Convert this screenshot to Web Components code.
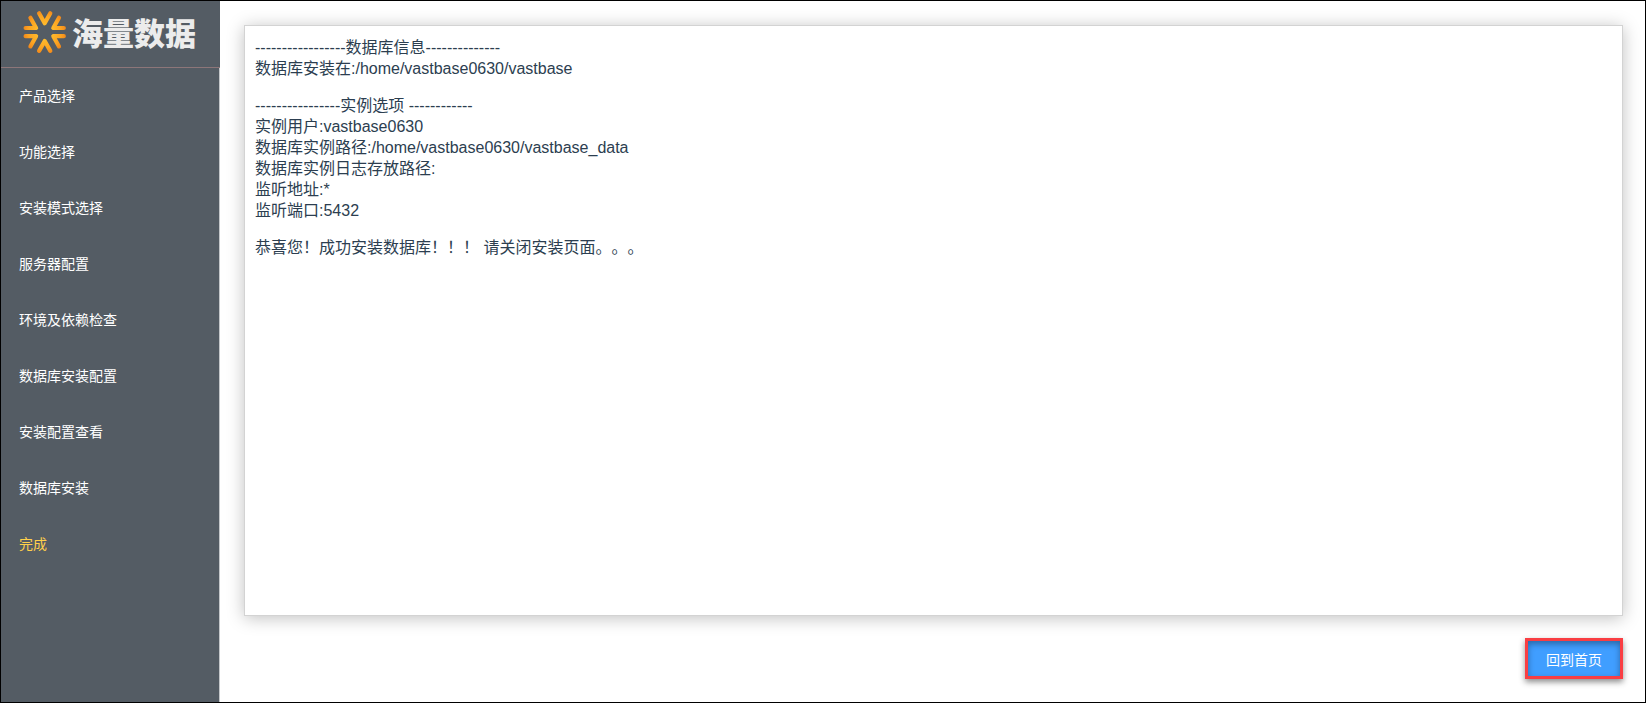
<!DOCTYPE html>
<html lang="zh-CN">
<head>
<meta charset="utf-8">
<title>数据库安装</title>
<style>
    html, body { height: 100%; margin: 0; }
    body {
        font-family: "Liberation Sans", "Noto Sans CJK SC", sans-serif;
        color: #2c3e50;
        background: #fff; }
</style>
</head>
<body>

<install-app>
    <brand-logo slot="brand">海量数据</brand-logo>
    <step-menu slot="steps" current="8"
        steps="产品选择,功能选择,安装模式选择,服务器配置,环境及依赖检查,数据库安装配置,安装配置查看,数据库安装,完成"></step-menu>
    <result-panel>
        <p>-----------------数据库信息--------------<br>
        数据库安装在:/home/vastbase0630/vastbase</p>
        <p>----------------实例选项 ------------<br>
        实例用户:vastbase0630<br>
        数据库实例路径:/home/vastbase0630/vastbase_data<br>
        数据库实例日志存放路径:<br>
        监听地址:*<br>
        监听端口:5432</p>
        <p>恭喜您！成功安装数据库！！！ 请关闭安装页面。。。</p>
    </result-panel>
    <home-button>回到首页</home-button>
</install-app>

<template id="app">
    <style>
        :host {
            display: flex;
            box-sizing: border-box;
            min-height: 100%;
            border: 1px solid #000; }
        aside {
            flex: none;
            display: flex;
            flex-direction: column;
            width: 219px;
            background: #545c64; }
        nav {
            flex: 1;
            border-right: 1px solid #c4c7ca; }
        main {
            flex: 1;
            min-width: 0;
            display: flex;
            flex-direction: column;
            align-items: flex-end;
            gap: 22px;
            padding: 24px 22px 23px 24px; }
    </style>
    <aside>
        <slot name="brand"></slot>
        <nav><slot name="steps"></slot></nav>
    </aside>
    <main><slot></slot></main>
</template>

<template id="logo">
    <style>
        :host {
            display: flex;
            align-items: center;
            gap: 6px;
            box-sizing: border-box;
            height: 67px;
            padding: 0 0 5px 22px;
            border-bottom: 1px solid #8d7679;
            color: #ececec;
            font: 900 31px/40px "Noto Sans CJK SC", sans-serif;
            white-space: nowrap; }
        svg { flex: none; width: 43px; height: 44px; }
    </style>
    <svg viewBox="23 10 43 44" aria-hidden="true">
        <defs>
            <radialGradient id="glow" gradientUnits="userSpaceOnUse" cx="44.7" cy="32" r="22">
                <stop offset="0.3" stop-color="#ffbd2e"/>
                <stop offset="0.75" stop-color="#fca321"/>
                <stop offset="1" stop-color="#ef861b"/>
            </radialGradient>
        </defs>
        <g fill="none" stroke="url(#glow)" stroke-width="4.2" stroke-linecap="round" stroke-linejoin="round">
            <path d="M39.1 13.3 44.7 23.2 50.3 13.3"/>
            <path d="M39.1 50.9 44.7 41 50.3 50.9"/>
            <path d="M30.4 17.8 36.1 28H25.6"/>
            <path d="M59 17.8 53.3 28H63.8"/>
            <path d="M30.4 46.4 36.1 36.2H25.6"/>
            <path d="M59 46.4 53.3 36.2H63.8"/>
        </g>
    </svg>
    <slot></slot>
</template>

<template id="menu">
    <style>
        :host { display: block; }
        ul { margin: 0; padding: 0; list-style: none; }
        a {
            display: block;
            padding: 0 18px;
            font-size: 14px;
            line-height: 56px;
            color: #fff;
            text-decoration: none; }
        a.active { color: #ffd04b; }
        a:hover { background: #434a50; }
    </style>
    <ul></ul>
</template>

<template id="panel">
    <style>
        :host {
            flex: 1;
            align-self: stretch;
            box-sizing: border-box;
            padding: 11px 10px;
            border: 1px solid #d3d3d3;
            background: #fff;
            box-shadow: 0 2px 16px rgba(0, 0, 0, 0.25);
            font-size: 16px;
            line-height: 21px;
            text-spacing-trim: space-all; }
        ::slotted(p) { margin: 0 0 16px; }
    </style>
    <slot></slot>
</template>

<template id="button">
    <style>
        :host { display: block; }
        button {
            display: block;
            height: 41px;
            padding: 0 18px;
            border: 3px solid #f93e43;
            color: #fff;
            background: #409eff;
            box-shadow: 0 3px 6px rgba(0, 0, 0, 0.45), inset 0 3px 6px rgba(0, 0, 0, 0.35);
            font-family: inherit;
            font-size: 14px;
            cursor: pointer; }
    </style>
    <button type="button"><slot></slot></button>
</template>

<script>

class BaseElement extends HTMLElement {
    constructor() {
        super();
        let template = document.getElementById(this.constructor.template);
        this.attachShadow({mode: 'open'}).appendChild(template.content.cloneNode(true));
    }
}

class InstallApp extends BaseElement {
    static template = 'app';
}

class BrandLogo extends BaseElement {
    static template = 'logo';
}

class ResultPanel extends BaseElement {
    static template = 'panel';
}

class HomeButton extends BaseElement {
    static template = 'button';
}

class StepMenu extends BaseElement {
    static template = 'menu';

    connectedCallback() {
        let list = this.shadowRoot.querySelector('ul');
        let current = Number(this.getAttribute('current'));
        list.replaceChildren();

        this.getAttribute('steps').split(',').forEach((step, i) => {
            let item = document.createElement('li');
            let link = document.createElement('a');
            link.href = '#step' + (i + 1);
            link.textContent = step;
            if (i === current) {
                link.className = 'active';
                link.setAttribute('aria-current', 'step');
            }
            item.appendChild(link);
            list.appendChild(item);
        });
    }
}

customElements.define('install-app', InstallApp);
customElements.define('brand-logo', BrandLogo);
customElements.define('step-menu', StepMenu);
customElements.define('result-panel', ResultPanel);
customElements.define('home-button', HomeButton);

</script>
</body>
</html>
